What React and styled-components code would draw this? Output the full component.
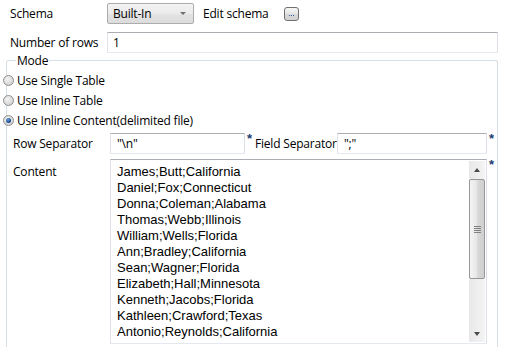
import React from 'react'
import styled, { createGlobalStyle } from 'styled-components'

const GlobalStyle = createGlobalStyle`
  html, body {
    margin: 0;
    background: #fff;
  }
`

const Page = styled.div`
  width: 506px;
  height: 347px;
  overflow: hidden;
  box-sizing: border-box;
  padding: 3px 8px 0 0;
  font-family: "Open Sans", "Noto Sans", sans-serif;
  font-size: 12px;
  letter-spacing: -0.2px;
  color: #000;
`

const TopRow = styled.div`
  display: flex;
  align-items: center;
  height: 21px;
  padding-left: 10px;
  margin-top: ${({ $gap }) => $gap || 0}px;
`

const Label = styled.span`
  flex: none;
  width: ${({ $w }) => $w}px;
  white-space: nowrap;
`

const Combo = styled.div`
  display: flex;
  align-items: center;
  justify-content: space-between;
  width: 87px;
  height: 21px;
  box-sizing: border-box;
  padding: 0 7px 0 5px;
  border: 1px solid #acacac;
  border-radius: 2px;
  background: linear-gradient(#f3f3f3, #ebebeb 50%, #e3e3e3 51%, #dcdcdc);
`

const ComboArrow = styled.span`
  width: 0;
  height: 0;
  border-left: 3px solid transparent;
  border-right: 3px solid transparent;
  border-top: 3px solid #707070;
`

const LinkText = styled.span`
  margin-left: 9px;
`

const DotsButton = styled.button`
  display: flex;
  align-items: flex-end;
  justify-content: center;
  width: 15px;
  height: 14px;
  margin-left: 15px;
  padding: 0 0 4px;
  box-sizing: border-box;
  border: 1px solid #707070;
  border-radius: 3px;
  background: linear-gradient(#f6f6f6, #e4e4e4 50%, #d9d9d9 51%, #d2d2d2);
  gap: 1px;
`

const Dot = styled.span`
  width: 1px;
  height: 1px;
  background: #2f5f9e;
`

const TextInput = styled.input`
  flex: ${({ $w }) => ($w ? 'none' : '1')};
  width: ${({ $w }) => ($w ? `${$w}px` : 'auto')};
  min-width: 0;
  height: 21px;
  box-sizing: border-box;
  margin: 0;
  padding: 0 0 1px ${({ $pad }) => $pad || 5}px;
  border: 1px solid;
  border-color: #abadb3 #dbdfe6 #e3e9ef #e2e3ea;
  border-radius: 1px;
  background: #fff;
  font: inherit;
  letter-spacing: inherit;
  color: #000;
  outline: none;
`

const Group = styled.fieldset`
  min-width: 0;
  height: 300px;
  margin: 0 0 0 6px;
  padding: 0;
  border: 1px solid #d5dfe5;
  border-bottom: none;
  border-radius: 3px 3px 0 0;
`

const Legend = styled.legend`
  margin-left: 9px;
  padding: 0 1px;
  line-height: 15px;
`

const RadioRow = styled.label`
  display: flex;
  align-items: center;
  gap: 3px;
  height: 20px;
  margin-left: -4px;
  margin-top: ${({ $first }) => ($first ? 2 : 0)}px;
`

const Radio = styled.span`
  display: flex;
  align-items: center;
  justify-content: center;
  flex: none;
  width: 11px;
  height: 11px;
  box-sizing: border-box;
  border: 1px solid #8e8f8f;
  border-radius: 50%;
  background: radial-gradient(circle at 40% 35%, #f4f4f4, #dadada 60%, #c8c8c8);
`

const RadioDot = styled.span`
  width: 5px;
  height: 5px;
  border-radius: 50%;
  background: radial-gradient(circle at 40% 35%, #6fa0dc, #1b4f91 60%, #0d2f5e);
`

const FieldRow = styled.div`
  display: flex;
  align-items: ${({ $top }) => ($top ? 'flex-start' : 'center')};
  margin-top: ${({ $gap }) => $gap}px;
  padding-left: 6px;
`

const ContentLabel = styled(Label)`
  padding-top: 4px;
`

const Star = styled.span`
  flex: none;
  align-self: flex-start;
  width: ${({ $w }) => $w || 10}px;
  padding-left: 2px;
  box-sizing: border-box;
  font-family: "Liberation Sans", sans-serif;
  font-size: 13px;
  font-weight: bold;
  line-height: 12px;
  color: #1b3c6e;
`

const ContentBox = styled.div`
  display: flex;
  flex: 1;
  height: 185px;
  box-sizing: border-box;
  border: 1px solid;
  border-color: #abadb3 #dbdfe6 #e3e9ef #e2e3ea;
  background: #fff;
`

const Lines = styled.div`
  flex: 1;
  padding: 4px 0 0 6px;
  font-family: "Liberation Sans", Arial, sans-serif;
  font-size: 13px;
  letter-spacing: 0;
  line-height: 16px;
  white-space: pre;
  overflow: hidden;
`

const Scrollbar = styled.div`
  display: flex;
  flex-direction: column;
  width: 16px;
  margin: 1px 1px 1px 0;
  background: linear-gradient(to right, #e8e8e8, #f4f4f4);
`

const ScrollButton = styled.div`
  display: flex;
  align-items: center;
  justify-content: center;
  height: 17px;
`

const Triangle = styled.span`
  width: 0;
  height: 0;
  border-left: 3.5px solid transparent;
  border-right: 3.5px solid transparent;
  ${({ $down }) => ($down ? 'border-top: 4px solid #4a4a4a;' : 'border-bottom: 4px solid #4a4a4a;')}
`

const Track = styled.div`
  flex: 1;
  padding-top: 1px;
`

const Thumb = styled.div`
  display: flex;
  align-items: center;
  justify-content: center;
  height: 100px;
  box-sizing: border-box;
  border: 1px solid #979797;
  border-radius: 2px;
  background: linear-gradient(to right, #f4f4f4, #e8e8e8 45%, #d9d9d9 55%, #cfcfcf);
`

const Grip = styled.span`
  width: 7px;
  height: 7px;
  background: repeating-linear-gradient(#808080 0 1px, transparent 1px 2px);
`

const rows = [
  'James;Butt;California',
  'Daniel;Fox;Connecticut',
  'Donna;Coleman;Alabama',
  'Thomas;Webb;Illinois',
  'William;Wells;Florida',
  'Ann;Bradley;California',
  'Sean;Wagner;Florida',
  'Elizabeth;Hall;Minnesota',
  'Kenneth;Jacobs;Florida',
  'Kathleen;Crawford;Texas',
  'Antonio;Reynolds;California',
]

const modes = [
  { label: 'Use Single Table', checked: false },
  { label: 'Use Inline Table', checked: false },
  { label: 'Use Inline Content(delimited file)', checked: true },
]

const App = () => {
  return (
    <Page>
      <GlobalStyle />
      <TopRow>
        <Label $w={97}>Schema</Label>
        <Combo>
          <span>Built-In</span>
          <ComboArrow />
        </Combo>
        <LinkText>Edit schema</LinkText>
        <DotsButton>
          <Dot />
          <Dot />
          <Dot />
        </DotsButton>
      </TopRow>
      <TopRow $gap={8}>
        <Label $w={97}>Number of rows</Label>
        <TextInput readOnly value="1" />
      </TopRow>
      <Group>
        <Legend>Mode</Legend>
        {modes.map((m, i) => (
          <RadioRow key={m.label} $first={i === 0}>
            <Radio>{m.checked && <RadioDot />}</Radio>
            {m.label}
          </RadioRow>
        ))}
        <FieldRow $gap={3}>
          <Label $w={97}>Row Separator</Label>
          <TextInput readOnly value={'"\\n"'} $w={135} $pad={6} />
          <Star $w={10}>*</Star>
          <Label $w={82}>Field Separator</Label>
          <TextInput readOnly value={'";"'} $pad={6} />
          <Star>*</Star>
        </FieldRow>
        <FieldRow $gap={5} $top>
          <ContentLabel $w={97}>Content</ContentLabel>
          <ContentBox>
            <Lines>{rows.join('\n')}</Lines>
            <Scrollbar>
              <ScrollButton>
                <Triangle />
              </ScrollButton>
              <Track>
                <Thumb>
                  <Grip />
                </Thumb>
              </Track>
              <ScrollButton>
                <Triangle $down />
              </ScrollButton>
            </Scrollbar>
          </ContentBox>
          <Star>*</Star>
        </FieldRow>
      </Group>
    </Page>
  )
}

export default App
